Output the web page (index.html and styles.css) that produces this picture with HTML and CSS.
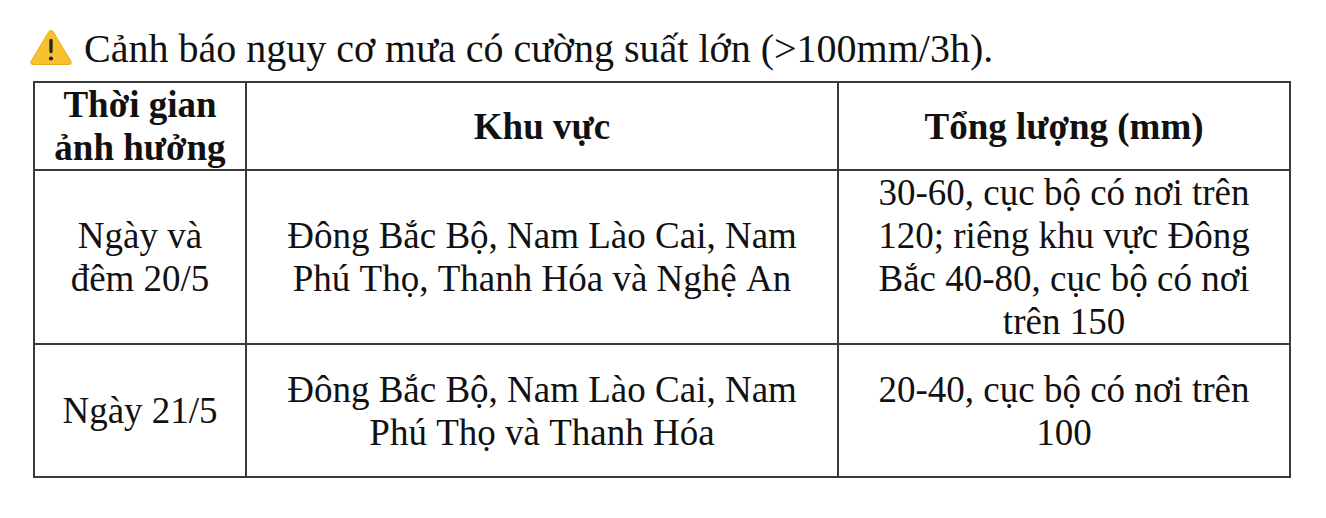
FILE: index.html
```html
<!DOCTYPE html>
<html lang="vi">
<head>
<meta charset="utf-8">
<title>Cảnh báo</title>
<link rel="stylesheet" href="styles.css">
</head>
<body>
<div class="page">
  <p class="title"><svg class="warn" viewBox="0 0 44 38" width="42" height="37" aria-hidden="true"><path d="M19.2 3.2 Q22 -1.2 24.8 3.2 L42.6 33 Q44.6 36.8 40.4 36.8 L3.6 36.8 Q-0.6 36.8 1.4 33 Z" fill="#f8c02c" stroke="#e9a91c" stroke-width="1"/><rect x="20.3" y="10" width="3.4" height="15" rx="1.5" fill="#222"/><circle cx="22" cy="30.5" r="2.2" fill="#222"/></svg><span>Cảnh báo nguy cơ mưa có cường suất lớn (&gt;100mm/3h).</span></p>
  <table class="rain">
    <colgroup><col class="c1"><col class="c2"><col class="c3"></colgroup>
    <thead>
      <tr class="head"><th>Thời gian<br>ảnh hưởng</th><th>Khu vực</th><th>Tổng lượng (mm)</th></tr>
    </thead>
    <tbody>
      <tr class="r1"><td>Ngày và<br>đêm 20/5</td><td>Đông Bắc Bộ, Nam Lào Cai, Nam<br>Phú Thọ, Thanh Hóa và Nghệ An</td><td>30-60, cục bộ có nơi trên<br>120; riêng khu vực Đông<br>Bắc 40-80, cục bộ có nơi<br>trên 150</td></tr>
      <tr class="r2"><td>Ngày 21/5</td><td>Đông Bắc Bộ, Nam Lào Cai, Nam<br>Phú Thọ và Thanh Hóa</td><td>20-40, cục bộ có nơi trên<br>100</td></tr>
    </tbody>
  </table>
</div>
</body>
</html>
```
FILE: styles.css
```css
html, body { margin: 0; padding: 0; background: #fff; }
body { font-family: "Liberation Serif", "Times New Roman", serif; color: #111; }
.page { padding: 26px 0 0 30px; }
.title { margin: 0; font-size: 40px; line-height: 46px; display: flex; align-items: center; gap: 12px; }
.warn { flex: none; margin-top: -4px; }
.rain { border-collapse: collapse; margin-top: 9px; table-layout: fixed; width: 1256px; margin-left: 3px; }
.c1 { width: 212px; } .c2 { width: 592px; } .c3 { width: 452px; }
.rain th, .rain td { border: 2px solid #3a3a3a; text-align: center; vertical-align: middle; padding: 0 4px; font-size: 37px; line-height: 43px; }
.rain th { font-weight: bold; }
.rain td { font-kerning: none; font-variant-ligatures: none; text-rendering: optimizeSpeed; font-synthesis: none; }
.head th { height: 85px; }
.r1 td { height: 171px; }
.r2 td { height: 131px; }
```
